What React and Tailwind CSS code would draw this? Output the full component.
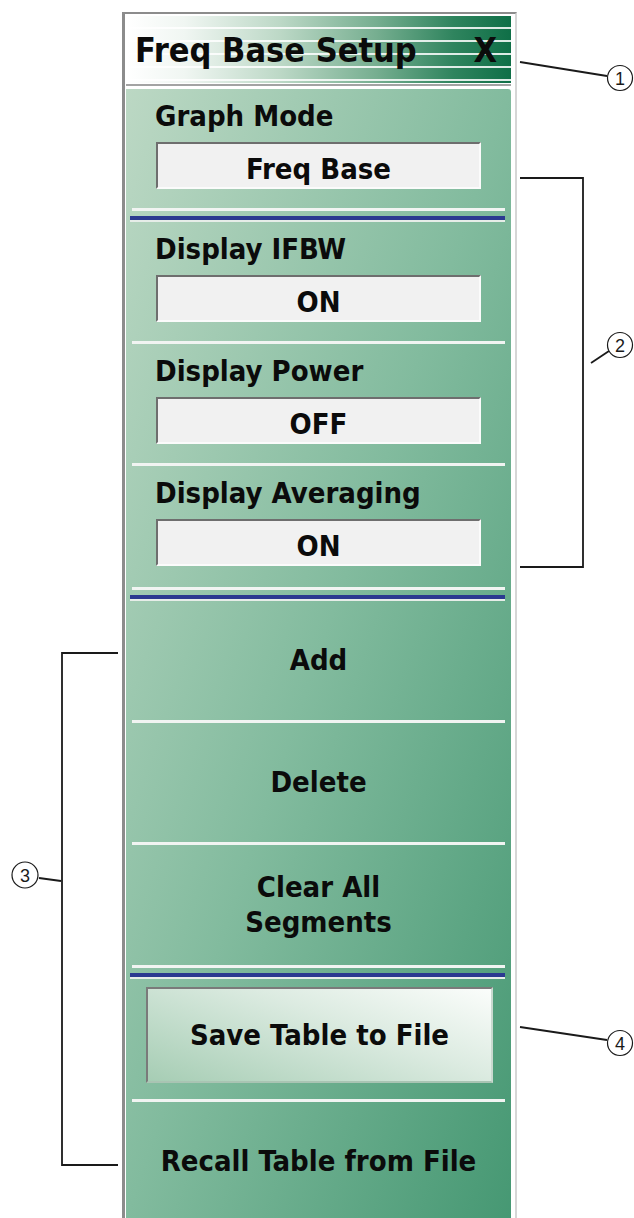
export default function App() {
  return (
    <div className="relative w-[634px] h-[1218px] overflow-hidden bg-white [font-family:'DejaVu_Sans_Condensed','DejaVu_Sans',sans-serif] [font-stretch:condensed] text-[#0b0b0b]">
      <div className="ml-[122px] mt-[12px] w-[395px] border-t-2 border-l-[3px] border-r-2 border-t-[#8c8c8c] border-l-[#8c8c8c] border-r-[#d6d6d6] bg-white pt-[2px]">
        {/* Header */}
        <div className="ml-[2px] mr-[4px] h-[67px] flex items-center justify-between pl-[8px] pr-[14px] text-[34px] font-bold leading-none [background-image:repeating-linear-gradient(to_bottom,transparent_0px,transparent_11px,rgba(255,255,255,0.85)_11px,rgba(255,255,255,0.85)_13px),linear-gradient(to_right,#ffffff_0%,#f0f6f2_15%,#bcd8c6_40%,#76ae90_65%,#2f845e_85%,#0f6f47_100%)]">
          <span>Freq Base Setup</span>
          <span>X</span>
        </div>
        <div className="ml-[2px] mr-[4px] h-px bg-white" />
        <div className="ml-[1px] mr-[4px] h-[2px] bg-[#a3a3a3]" />
        <div className="h-[3px]" />

        {/* Content */}
        <div className="ml-[1px] mr-[4px] rounded-tr-[3px] bg-[linear-gradient(to_bottom_right,#bcd8c4_0%,#82bb9e_50%,#469873_100%)] flex flex-col">
          {/* Graph Mode */}
          <div className="h-[119px] pl-[29px] pt-[10px]">
            <div className="text-[29px] font-bold leading-[34px]">Graph Mode</div>
            <div className="mt-[9px] ml-[1px] w-[325px] h-[47px] border-2 border-t-[#6e6e6e] border-l-[#6e6e6e] border-b-[#fbfbfb] border-r-[#fbfbfb] bg-[#f1f1f1] flex items-center justify-center pt-[8px] text-[29px] font-bold leading-none">
              Freq Base
            </div>
          </div>
          <div className="h-[14px] flex flex-col">
            <div className="mx-[6px] h-[3px] bg-[#f1f4f2]" />
            <div className="h-[5px]" />
            <div className="ml-[4px] mr-[6px] h-[4px] bg-[#2b3990]" />
            <div className="ml-[4px] mr-[6px] h-[2px] bg-[#e6ede8]" />
          </div>

          {/* Display IFBW */}
          <div className="h-[119px] pl-[29px] pt-[10px]">
            <div className="text-[29px] font-bold leading-[34px]">Display IFBW</div>
            <div className="mt-[9px] ml-[1px] w-[325px] h-[47px] border-2 border-t-[#6e6e6e] border-l-[#6e6e6e] border-b-[#fbfbfb] border-r-[#fbfbfb] bg-[#f1f1f1] flex items-center justify-center pt-[8px] text-[29px] font-bold leading-none">
              ON
            </div>
          </div>
          <div className="mx-[6px] h-[3px] bg-[#f1f4f2]" />

          {/* Display Power */}
          <div className="h-[119px] pl-[29px] pt-[10px]">
            <div className="text-[29px] font-bold leading-[34px]">Display Power</div>
            <div className="mt-[9px] ml-[1px] w-[325px] h-[47px] border-2 border-t-[#6e6e6e] border-l-[#6e6e6e] border-b-[#fbfbfb] border-r-[#fbfbfb] bg-[#f1f1f1] flex items-center justify-center pt-[8px] text-[29px] font-bold leading-none">
              OFF
            </div>
          </div>
          <div className="mx-[6px] h-[3px] bg-[#f1f4f2]" />

          {/* Display Averaging */}
          <div className="h-[121px] pl-[29px] pt-[10px]">
            <div className="text-[29px] font-bold leading-[34px]">Display Averaging</div>
            <div className="mt-[9px] ml-[1px] w-[325px] h-[47px] border-2 border-t-[#6e6e6e] border-l-[#6e6e6e] border-b-[#fbfbfb] border-r-[#fbfbfb] bg-[#f1f1f1] flex items-center justify-center pt-[8px] text-[29px] font-bold leading-none">
              ON
            </div>
          </div>
          <div className="h-[14px] flex flex-col">
            <div className="mx-[6px] h-[3px] bg-[#f1f4f2]" />
            <div className="h-[5px]" />
            <div className="ml-[4px] mr-[6px] h-[4px] bg-[#2b3990]" />
            <div className="ml-[4px] mr-[6px] h-[2px] bg-[#e6ede8]" />
          </div>

          {/* Add */}
          <div className="h-[119px] flex items-center justify-center text-[29px] font-bold leading-[35px]">
            Add
          </div>
          <div className="mx-[6px] h-[3px] bg-[#f1f4f2]" />

          {/* Delete */}
          <div className="h-[119px] flex items-center justify-center text-[29px] font-bold leading-[35px]">
            Delete
          </div>
          <div className="mx-[6px] h-[3px] bg-[#f1f4f2]" />

          {/* Clear All Segments */}
          <div className="h-[120px] flex flex-col items-center justify-center text-center text-[29px] font-bold leading-[35px]">
            <span>Clear All</span>
            <span>Segments</span>
          </div>
          <div className="h-[14px] flex flex-col">
            <div className="mx-[6px] h-[3px] bg-[#f1f4f2]" />
            <div className="h-[5px]" />
            <div className="ml-[4px] mr-[6px] h-[4px] bg-[#2b3990]" />
            <div className="ml-[4px] mr-[6px] h-[2px] bg-[#e6ede8]" />
          </div>

          {/* Save Table to File */}
          <div className="h-[120px] pt-[8px] pl-[20px]">
            <div className="w-[347px] h-[96px] border-2 border-t-[#7a7a7a] border-l-[#7a7a7a] border-b-[#a9c4b3] border-r-[#c9d9cf] bg-[linear-gradient(200deg,#fbfdfb_0%,#dcebe1_40%,#a6cdb4_100%)] flex items-center justify-center text-[29px] font-bold leading-none">
              Save Table to File
            </div>
          </div>
          <div className="mx-[6px] h-[3px] bg-[#f1f4f2]" />

          {/* Recall Table from File */}
          <div className="h-[118px] flex items-center justify-center text-[29px] font-bold leading-[35px]">
            Recall Table from File
          </div>
        </div>
      </div>

      {/* Callouts */}
      <svg
        className="absolute left-0 top-0 pointer-events-none"
        width="634"
        height="1218"
        viewBox="0 0 634 1218"
      >
        <g stroke="#1a1a1a" fill="none">
          {/* 1 */}
          <line x1="520" y1="62" x2="607" y2="76" strokeWidth="1.8" />
          <circle cx="620" cy="78" r="12.5" strokeWidth="1.2" fill="white" />
          {/* 2 */}
          <polyline points="520,178 583,178 583,567 520,567" strokeWidth="1.8" />
          <line x1="591" y1="363" x2="609" y2="351" strokeWidth="1.8" />
          <circle cx="620" cy="345" r="12.5" strokeWidth="1.2" fill="white" />
          {/* 3 */}
          <polyline points="118,653 62,653 62,1165 118,1165" strokeWidth="1.8" />
          <line x1="39" y1="878" x2="61" y2="881" strokeWidth="1.8" />
          <circle cx="25" cy="875" r="13" strokeWidth="1.2" fill="white" />
          {/* 4 */}
          <line x1="520" y1="1027" x2="607" y2="1040" strokeWidth="1.8" />
          <circle cx="620" cy="1043" r="12.5" strokeWidth="1.2" fill="white" />
        </g>
        <g
          fill="#1a1a1a"
          fontFamily="'Liberation Sans', Arial, sans-serif"
          fontSize="18"
          textAnchor="middle"
        >
          <text x="620" y="84.5">1</text>
          <text x="620" y="351.5">2</text>
          <text x="25" y="881.5">3</text>
          <text x="620" y="1049.5">4</text>
        </g>
      </svg>
    </div>
  );
}
